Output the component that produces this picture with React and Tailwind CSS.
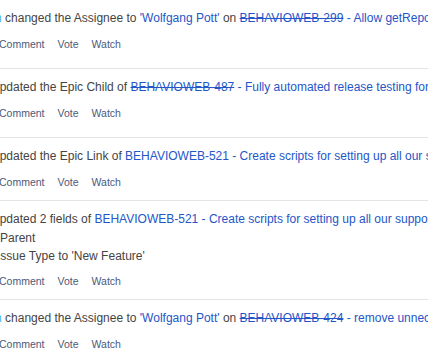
const rows = [
  {
    actor: 'n',
    verb: 'changed the Assignee to ',
    quote: "'Wolfgang Pott'",
    on: ' on ',
    key: 'BEHAVIOWEB-299',
    done: true,
    title: ' - Allow getReport to return report files in zipped format',
    pb: 'pb-[17px]',
  },
  {
    verb: 'updated the Epic Child of ',
    key: 'BEHAVIOWEB-487',
    done: true,
    title: ' - Fully automated release testing for every build',
    pb: 'pb-[17px]',
  },
  {
    verb: 'updated the Epic Link of ',
    key: 'BEHAVIOWEB-521',
    title: ' - Create scripts for setting up all our supported environments',
    pb: 'pb-[11px]',
  },
  {
    verb: 'updated 2 fields of ',
    key: 'BEHAVIOWEB-521',
    title: ' - Create scripts for setting up all our supported environments',
    extra: ['Parent', "Issue Type to 'New Feature'"],
    pb: 'pb-[11px]',
  },
  {
    actor: 'n',
    verb: 'changed the Assignee to ',
    quote: "'Wolfgang Pott'",
    on: ' on ',
    key: 'BEHAVIOWEB-424',
    done: true,
    title: ' - remove unnecessary dependencies from the build',
    pb: 'pb-[11px]',
  },
];

function Activity({ row, first }) {
  return (
    <div className={`${first ? 'pt-[10px]' : 'pt-[10px] border-t border-[#e4e4e4]'} ${row.pb}`}>
      <div className={`whitespace-nowrap text-[12px] leading-[17px] text-[#444] ${row.actor ? '-ml-[5px]' : '-ml-[7px]'}`}>
        {row.actor && (
          <>
            <span className="text-[#4ab4e6]">{row.actor}</span>{' '}
          </>
        )}
        {row.verb}
        {row.quote && <span className="text-[#2456c8]">{row.quote}</span>}
        {row.on}
        <a className={`text-[#2456c8] ${row.done ? 'line-through' : ''}`}>{row.key}</a>
        <span className="text-[#2456c8]">{row.title}</span>
      </div>
      {row.extra && (
        <div className="mt-[1px] text-[12px] leading-[18px] text-[#444] whitespace-nowrap">
          <div>{row.extra[0]}</div>
          <div className="-ml-[3px]">{row.extra[1]}</div>
        </div>
      )}
      <div
        className={`${row.extra ? 'mt-[9px]' : 'mt-[10px]'} -ml-[1px] flex gap-[13px] whitespace-nowrap text-[10.5px] leading-[14px] text-[#4b5a7a]`}
      >
        <span>Comment</span>
        <span>Vote</span>
        <span>Watch</span>
      </div>
    </div>
  );
}

export default function App() {
  return (
    <div
      className="w-[428px] h-[354px] overflow-hidden bg-white"
      style={{ fontFamily: '"Liberation Sans", Arial, sans-serif' }}
    >
      {rows.map((row, i) => (
        <Activity key={i} row={row} first={i === 0} />
      ))}
    </div>
  );
}
